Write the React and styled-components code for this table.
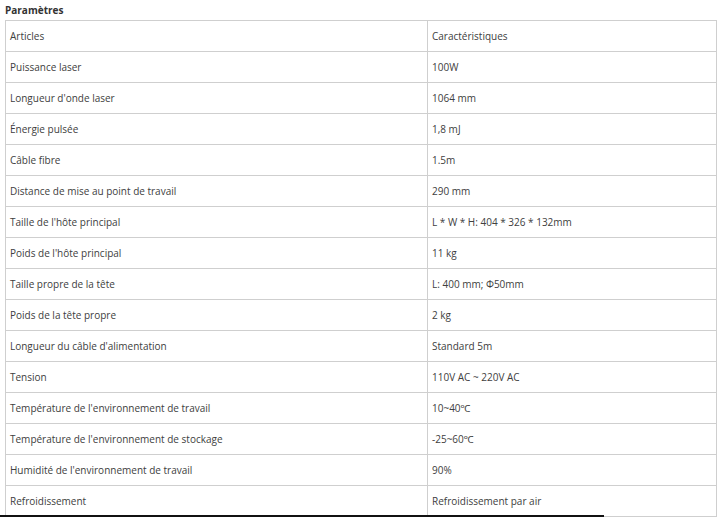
import styled, { createGlobalStyle } from "styled-components";

const GlobalStyle = createGlobalStyle`
  html, body {
    margin: 0;
    padding: 0;
    background: #ffffff;
  }
  body {
    font-family: "Open Sans", "Noto Sans", sans-serif;
    color: #333333;
  }
`;

const Page = styled.div`
  width: 718px;
  height: 518px;
  overflow: hidden;
  display: flex;
  flex-direction: column;
`;

const Title = styled.div`
  height: 20px;
  padding-left: 5px;
  font-size: 10px;
  font-weight: 700;
  line-height: 20px;
  color: #333333;
`;

const Table = styled.table`
  margin-left: 5px;
  width: 712px;
  border-collapse: collapse;
  table-layout: fixed;
  font-size: 10px;
`;

const Row = styled.tr`
  height: 31px;
`;

const Cell = styled.td`
  border: 1px solid #cfcfcf;
  padding: 0 0 0 4px;
  vertical-align: middle;
  color: #404040;
  white-space: nowrap;
  width: ${(p) => p.$w || "auto"};
`;

const BottomBar = styled.div`
  width: 604px;
  height: 2px;
  margin-top: -2px;
  background: #111111;
  position: relative;
`;

const rows = [
  ["Articles", "Caractéristiques"],
  ["Puissance laser", "100W"],
  ["Longueur d'onde laser", "1064 mm"],
  ["Énergie pulsée", "1,8 mJ"],
  ["Câble fibre", "1.5m"],
  ["Distance de mise au point de travail", "290 mm"],
  ["Taille de l'hôte principal", "L * W * H: 404 * 326 * 132mm"],
  ["Poids de l'hôte principal", "11 kg"],
  ["Taille propre de la tête", "L: 400 mm; Φ50mm"],
  ["Poids de la tête propre", "2 kg"],
  ["Longueur du câble d'alimentation", "Standard 5m"],
  ["Tension", "110V AC ~ 220V AC"],
  ["Température de l'environnement de travail", "10~40℃"],
  ["Température de l'environnement de stockage", "-25~60℃"],
  ["Humidité de l'environnement de travail", "90%"],
  ["Refroidissement", "Refroidissement par air"],
];

export default function App() {
  return (
    <Page>
      <GlobalStyle />
      <Title>Paramètres</Title>
      <Table>
        <tbody>
          {rows.map(([a, b], i) => (
            <Row key={i}>
              <Cell $w="417px">{a}</Cell>
              <Cell>{b}</Cell>
            </Row>
          ))}
        </tbody>
      </Table>
      <BottomBar />
    </Page>
  );
}
